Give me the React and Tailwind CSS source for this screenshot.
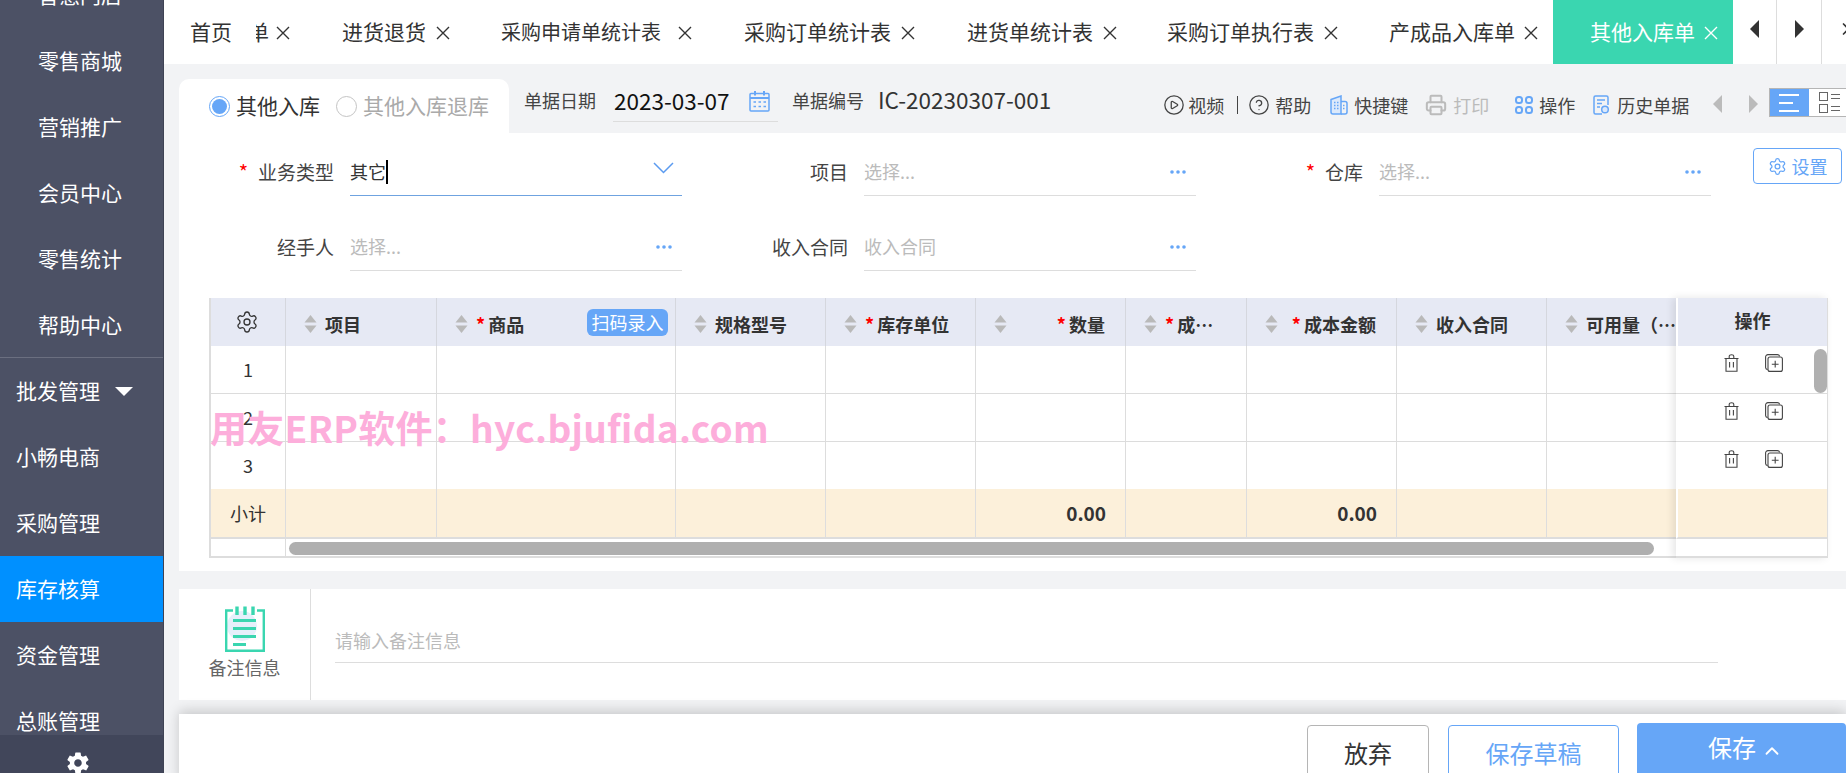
import { Settings, ChevronUp, CirclePlay, CircleHelp, Printer, ChevronRight } from "lucide-react";
import { IoMdSettings } from "react-icons/io";

const FONT = "font-['Noto_Sans_CJK_SC','Noto_Sans',sans-serif]";

const menuItems = [
  { label: "智慧门店", sub: true },
  { label: "零售商城", sub: true },
  { label: "营销推广", sub: true },
  { label: "会员中心", sub: true },
  { label: "零售统计", sub: true },
  { label: "帮助中心", sub: true, line: true },
  { label: "批发管理", caret: true },
  { label: "小畅电商" },
  { label: "采购管理" },
  { label: "库存核算", active: true },
  { label: "资金管理" },
  { label: "总账管理" },
];

const tabs = [
  { label: "进货退货", left: "ml-[52px]", gap: "ml-[10px]" },
  { label: "采购申请单统计表", left: "ml-[51px] text-[20px]", gap: "ml-[17px]" },
  { label: "采购订单统计表", left: "ml-[52px]", gap: "ml-[10px]" },
  { label: "进货单统计表", left: "ml-[52px]", gap: "ml-[10px]" },
  { label: "采购订单执行表", left: "ml-[50px]", gap: "ml-[10px]" },
  { label: "产成品入库单", left: "ml-[51px]", gap: "ml-[9px]" },
];

const columns = [
  { label: "项目", w: "w-[151px]" },
  { label: "商品", w: "w-[239px]", star: true, scan: true },
  { label: "规格型号", w: "w-[150px]" },
  { label: "库存单位", w: "w-[150px]", star: true },
  { label: "数量", w: "w-[150px]", star: true, right: true, total: "0.00" },
  { label: "成…", w: "w-[121px]", star: true },
  { label: "成本金额", w: "w-[150px]", star: true, right: true, total: "0.00" },
  { label: "收入合同", w: "w-[150px]" },
  { label: "可用量（…", w: "w-[129px]", last: true },
];

function CloseIcon({ className = "" }) {
  return (
    <svg width="14" height="14" viewBox="0 0 14 14" fill="none" stroke="currentColor" strokeWidth="1.4" className={`shrink-0 mt-[2px] ${className}`}>
      <path d="M1 1L13 13M13 1L1 13" />
    </svg>
  );
}

function SortArrows() {
  return (
    <svg width="13" height="18" viewBox="0 0 13 18" className="shrink-0 mt-[3px]">
      <path d="M6.5 0L12.5 7.5H0.5Z" fill="#b9b9b9" />
      <path d="M6.5 18L12.5 10.5H0.5Z" fill="#b9b9b9" />
    </svg>
  );
}

function Dots() {
  return (
    <svg width="16" height="4" viewBox="0 0 16 4">
      <circle cx="2" cy="2" r="1.8" fill="#66a6f7" />
      <circle cx="8" cy="2" r="1.8" fill="#66a6f7" />
      <circle cx="14" cy="2" r="1.8" fill="#66a6f7" />
    </svg>
  );
}

function TrashIcon() {
  return (
    <svg width="15" height="18" viewBox="0 0 15 18" fill="none" stroke="#444" strokeWidth="1.1">
      <path d="M0.5 4.5H14.5M2 4.5V17.2H13V4.5M5.2 4.5V2.6C5.2 1.3 6.2 0.7 7.5 0.7C8.8 0.7 9.8 1.3 9.8 2.6V4.5M5.6 8V13.6M9.4 8V13.6" />
    </svg>
  );
}

function CopyIcon() {
  return (
    <svg width="18" height="18" viewBox="0 0 18 18" fill="none" stroke="#444" strokeWidth="1.1">
      <path d="M2.6 15.6C1.4 15.4 0.6 14.6 0.6 13.4V3C0.6 1.6 1.6 0.6 3 0.6H12.4C13.6 0.6 14.4 1.4 14.6 2.4" />
      <rect x="3" y="3" width="14.4" height="14.4" rx="2" />
      <path d="M10.2 6.8V13.6M6.8 10.2H13.6" />
    </svg>
  );
}

function BuildingIcon() {
  return (
    <svg width="18" height="20" viewBox="0 0 18 20" fill="none" stroke="#66a6f7" strokeWidth="1.5">
      <path d="M1 4.5L11 1V19H3C1.9 19 1 18.1 1 17V4.5Z" fill="#dce9fb" />
      <path d="M11 6.5H15C16.1 6.5 17 7.4 17 8.5V17C17 18.1 16.1 19 15 19H11" />
      <path d="M4 7.5H5.5M7 7.5H8.5M4 10.5H5.5M7 10.5H8.5M4 13.5H5.5M7 13.5H8.5M13 10.5H14.5M13 13.5H14.5" strokeWidth="1.3" />
    </svg>
  );
}

function GridIcon() {
  return (
    <svg width="18" height="18" viewBox="0 0 18 18" fill="none" stroke="#66a6f7" strokeWidth="2">
      <rect x="1" y="1" width="6" height="6" rx="2.5" />
      <rect x="11" y="1" width="6" height="6" rx="2.5" />
      <rect x="1" y="11" width="6" height="6" rx="2.5" />
      <rect x="11" y="11" width="6" height="6" rx="2.5" />
    </svg>
  );
}

function HistoryIcon() {
  return (
    <svg width="17" height="20" viewBox="0 0 17 20" fill="none" stroke="#66a6f7" strokeWidth="1.5">
      <path d="M9 19H2.5C1.5 19 1 18.4 1 17.5V2.5C1 1.5 1.5 1 2.5 1H13.5C14.5 1 15 1.5 15 2.5V10" />
      <path d="M4 5H12M4 8.5H9M4 12H7" />
      <circle cx="12" cy="14.5" r="3.3" fill="#dce9fb" />
    </svg>
  );
}

function CalendarIcon() {
  return (
    <svg width="21" height="22" viewBox="0 0 21 22" fill="none" stroke="#66a6f7" strokeWidth="1.5">
      <rect x="1" y="3.5" width="19" height="17.5" rx="1" />
      <path d="M1 8H20" strokeWidth="2" />
      <path d="M6 1V5.5M15 1V5.5" strokeWidth="2" />
      <path d="M4.5 12H7M9.5 12H12M14.5 12H17M4.5 16.5H7M9.5 16.5H12M14.5 16.5H17" strokeWidth="1.6" />
    </svg>
  );
}

function NoteIcon() {
  return (
    <svg width="40" height="46" viewBox="0 0 40 46" fill="none">
      <circle cx="17" cy="20" r="15" fill="#e6effb" />
      <path d="M8 4.5H1.2V44.8H38.8V4.5H32" stroke="#3ad6b0" strokeWidth="2.4" />
      <path d="M12 0.5V9M20 0.5V9M28 0.5V9" stroke="#3ad6b0" strokeWidth="3.4" />
      <path d="M8 14.5H31M8 22.5H31M8 30.5H31M8 38.5H21" stroke="#3ad6b0" strokeWidth="3.2" />
    </svg>
  );
}

function Sidebar() {
  return (
    <aside className="w-[164px] shrink-0 h-full bg-[#4c5165] border-r border-[#3f4354] flex flex-col overflow-hidden">
      <div className="flex-1 overflow-hidden">
        <div className="-mt-[38px]">
          {menuItems.map((item) => (
            <div
              key={item.label}
              className={`h-[66px] flex items-center text-[21px] text-white ${item.sub ? "pl-[38px]" : "pl-[16px]"} ${item.active ? "bg-[#0090ff]" : ""} ${item.line ? "border-b border-[#6b6f80]" : ""}`}
            >
              {item.label}
              {item.caret && (
                <span className="ml-[15px] mt-[1px] w-0 h-0 border-x-[9px] border-x-transparent border-t-[9px] border-t-white" />
              )}
            </div>
          ))}
        </div>
      </div>
      <div className="h-[38px] shrink-0 bg-[#41465a] flex justify-center pt-[15px] overflow-hidden">
        <IoMdSettings size={26} color="#fff" className="mr-[8px] shrink-0" />
      </div>
    </aside>
  );
}

function TabBar() {
  return (
    <div className="h-[64px] shrink-0 bg-white flex items-center text-[21px] text-[#333] overflow-hidden whitespace-nowrap">
      <span className="ml-[26px] shrink-0">首页</span>
      <span className="ml-[24px] w-[13px] shrink-0 overflow-hidden flex justify-end">
        <span className="shrink-0">单</span>
      </span>
      <CloseIcon className="ml-[7px]" />
      {tabs.map((t) => (
        <div key={t.label} className={`flex items-center shrink-0 ${t.left}`}>
          <span>{t.label}</span>
          <CloseIcon className={t.gap} />
        </div>
      ))}
      <div className="ml-[15px] w-[180px] h-full shrink-0 bg-[#3ad6b0] text-white flex items-center pl-[37px]">
        <span>其他入库单</span>
        <CloseIcon className="ml-[9px]" />
      </div>
      <div className="w-[44px] h-full shrink-0 border-r border-[#ddd] flex items-center justify-center pb-[6px]">
        <span className="w-0 h-0 border-y-[9px] border-y-transparent border-r-[9px] border-r-[#333]" />
      </div>
      <div className="w-[45px] h-full shrink-0 border-r border-[#ddd] flex items-center justify-center pb-[6px]">
        <span className="w-0 h-0 border-y-[9px] border-y-transparent border-l-[9px] border-l-[#333]" />
      </div>
      <ChevronRight size={20} className="ml-[14px] shrink-0 mb-[6px]" color="#333" />
    </div>
  );
}

function ToolButton({ icon, label, className = "", muted }) {
  return (
    <div className={`flex items-center shrink-0 ${muted ? "text-[#bbb]" : "text-[#444]"} ${className}`}>
      {icon}
      <span>{label}</span>
    </div>
  );
}

function Toolbar() {
  return (
    <div className="h-[69px] shrink-0 flex items-end">
      <div className="w-[330px] h-[54px] shrink-0 bg-white rounded-t-[10px] flex items-center pl-[30px] text-[21px]">
        <span className="w-[21px] h-[21px] rounded-full border border-[#66a6f7] flex items-center justify-center">
          <span className="w-[15px] h-[15px] rounded-full bg-[#66a6f7]" />
        </span>
        <span className="ml-[6px] text-[#333]">其他入库</span>
        <span className="ml-[16px] w-[21px] h-[21px] rounded-full border border-[#c4c4c4]" />
        <span className="ml-[6px] text-[#aaa]">其他入库退库</span>
      </div>
      <div className="flex-1 h-full flex items-start text-[18px] text-[#444] whitespace-nowrap">
        <span className="ml-[15px] mt-[23px] leading-[26px]">单据日期</span>
        <div className="ml-[17px] mt-[20px] w-[165px] h-[38px] border-b border-[#ddd] flex items-center pb-[4px] shrink-0">
          <span className="text-[22.5px] text-[#111] pl-[1px]">2023-03-07</span>
          <span className="ml-[19px]"><CalendarIcon /></span>
        </div>
        <span className="ml-[14px] mt-[23px] leading-[26px]">单据编号</span>
        <span className="ml-[14px] mt-[22px] leading-[26px] text-[22.5px] text-[#333]">IC-20230307-001</span>
        <div className="ml-[112px] mt-[28px] h-[26px] flex items-center">
          <ToolButton icon={<CirclePlay size={22} strokeWidth={1.4} color="#444" />} label="视频" className="gap-[3px]" />
          <span className="ml-[13px] w-[1px] h-[18px] bg-[#444] shrink-0" />
          <ToolButton icon={<CircleHelp size={22} strokeWidth={1.4} color="#444" />} label="帮助" className="ml-[10px] gap-[5px]" />
          <ToolButton icon={<BuildingIcon />} label="快捷键" className="ml-[19px] gap-[6px]" />
          <ToolButton icon={<Printer size={22} strokeWidth={2.2} color="#bbb" />} label="打印" className="ml-[17px] gap-[6px]" muted />
          <ToolButton icon={<GridIcon />} label="操作" className="ml-[26px] gap-[6px]" />
          <ToolButton icon={<HistoryIcon />} label="历史单据" className="ml-[18px] gap-[7px]" />
          <span className="ml-[24px] w-0 h-0 shrink-0 border-y-[9px] border-y-transparent border-r-[9px] border-r-[#bbb] -mt-[2px]" />
          <span className="ml-[27px] w-0 h-0 shrink-0 border-y-[9px] border-y-transparent border-l-[9px] border-l-[#bbb] -mt-[2px]" />
          <div className="ml-[11px] -mt-[5px] w-[80px] h-[29px] shrink-0 flex border border-[#b5b5b5] bg-white">
            <div className="w-[39px] bg-[#66a6f7] flex flex-col justify-center gap-[6px] px-[9px]">
              <span className="h-[2px] w-[20px] bg-white" />
              <span className="h-[2px] w-[14px] bg-white" />
              <span className="h-[2px] w-[20px] bg-white" />
            </div>
            <div className="flex-1 pl-[10px] flex flex-col justify-center gap-[3px]">
              <div className="flex items-center gap-[3px]">
                <span className="w-[9px] h-[9px] border border-[#666]" />
                <span className="w-[9px] h-[5px] border-y border-[#666]" />
              </div>
              <div className="flex items-center gap-[3px]">
                <span className="w-[9px] h-[9px] border border-[#666]" />
                <span className="w-[9px] h-[5px] border-y border-[#666]" />
              </div>
            </div>
          </div>
        </div>
      </div>
    </div>
  );
}

function Field({ label, star, width, placeholder, value, active, trailing }) {
  return (
    <div className={`flex items-center h-[48px] shrink-0 ${width}`}>
      <div className="flex-1 pr-[16px] flex justify-end items-center text-[19px] text-[#444]">
        {star && <span className="text-[#f00] mr-[10px] text-[20px]">*</span>}
        {label}
      </div>
      <div className={`w-[332px] h-full flex items-center justify-between border-b ${active ? "border-[#6fa3e0]" : "border-[#ddd]"}`}>
        {value ? (
          <span className="flex items-center text-[18px] text-[#333]">
            {value}
            <span className="w-[2px] h-[24px] bg-black" />
          </span>
        ) : (
          <span className="text-[18px] text-[#bbb]">{placeholder}</span>
        )}
        <span className="mr-[10px] flex items-center">{trailing}</span>
      </div>
    </div>
  );
}

function DataTable() {
  return (
    <div className="mt-[27px] ml-[30px] w-[1619px] flex text-[18px] text-[#333]">
      <div className="w-[1467px] shrink-0 border-l-2 border-[#ddd]">
        <div className="flex h-[48px] bg-[#e6e9f4]">
          <div className="w-[75px] shrink-0 border-r border-[#d5d7de] flex items-center justify-center pr-[2px]">
            <Settings size={24} strokeWidth={1.3} color="#333" />
          </div>
          {columns.map((c) => (
            <div
              key={c.label}
              className={`${c.w} shrink-0 flex items-center pl-[18px] font-bold whitespace-nowrap overflow-hidden ${c.last ? "" : "border-r border-[#d5d7de]"}`}
            >
              <SortArrows />
              <span className={`flex items-center mt-[4px] ${c.right ? "flex-1 justify-end pr-[20px]" : "ml-[8px]"}`}>
                {c.star && <span className="text-[#f00] mr-[3px]">*</span>}
                {c.label}
              </span>
              {c.scan && (
                <span className="ml-auto mr-[7px] w-[81px] h-[27px] rounded-[6px] bg-[#66a6f7] text-white font-normal flex items-center justify-center">
                  扫码录入
                </span>
              )}
            </div>
          ))}
        </div>
        {[1, 2, 3].map((n) => (
          <div key={n} className={`flex ${n === 3 ? "h-[47px]" : "h-[48px] border-b border-[#dcdcdc]"}`}>
            <div className="w-[75px] shrink-0 border-r border-[#ddd] flex items-center justify-center">{n}</div>
            {columns.map((c) => (
              <div key={c.label} className={`${c.w} shrink-0 ${c.last ? "" : "border-r border-[#ddd]"}`} />
            ))}
          </div>
        ))}
        <div className="flex h-[50px] bg-[#fcf0da] border-b-2 border-[#ddd]">
          <div className="w-[75px] shrink-0 border-r border-[#ddd] flex items-center justify-center">小计</div>
          {columns.map((c) => (
            <div
              key={c.label}
              className={`${c.w} shrink-0 flex items-center justify-end pr-[19px] text-[19px] font-semibold ${c.last ? "" : "border-r border-[#ddd]"}`}
            >
              {c.total}
            </div>
          ))}
        </div>
        <div className="flex h-[19px] border-b-2 border-[#ddd]">
          <div className="w-[75px] shrink-0 border-r border-[#ddd]" />
          <div className="flex-1 pl-[3px] pt-[3px]">
            <div className="w-[1365px] h-[13px] rounded-full bg-[#afafaf]" />
          </div>
        </div>
      </div>
      <div className="relative w-[152px] shrink-0 shadow-[-3px_0_8px_rgba(0,0,0,0.1)] border-r border-[#ddd]">
        <div className="h-[48px] bg-[#e6e9f4] border-l-2 border-white flex items-center justify-center font-bold pb-[4px]">操作</div>
        {[0, 1, 2].map((n) => (
          <div key={n} className={`flex gap-[26px] pl-[48px] pt-[8px] bg-white ${n === 2 ? "h-[47px]" : "h-[48px] border-b border-[#dcdcdc]"}`}>
            <TrashIcon />
            <CopyIcon />
          </div>
        ))}
        <div className="h-[50px] bg-[#fcf0da] border-l-2 border-white border-b-2 border-b-[#ddd]" />
        <div className="h-[19px] border-b-2 border-[#ddd]" />
        <span className="absolute right-0 top-[51px] w-[13px] h-[44px] rounded-full bg-[#b0b0b0]" />
      </div>
    </div>
  );
}

function FormCard() {
  return (
    <div className="h-[438px] shrink-0 bg-white pt-[15px]">
      <div className="flex">
        <Field
          label="业务类型"
          star
          width="w-[503px]"
          value="其它"
          active
          trailing={
            <svg width="21" height="12" viewBox="0 0 21 12" fill="none" stroke="#5b9bf0" strokeWidth="1.5" className="-mt-[7px] -mr-[2px]">
              <path d="M1 1L10.5 10.5L20 1" />
            </svg>
          }
        />
        <Field label="项目" width="w-[514px]" placeholder="选择..." trailing={<Dots />} />
        <Field label="仓库" star width="w-[515px]" placeholder="选择..." trailing={<Dots />} />
        <div className="ml-[42px] w-[89px] h-[36px] shrink-0 rounded-[4px] border border-[#66a6f7] text-[#66a6f7] text-[18px] flex items-center justify-center gap-[5px]">
          <Settings size={19} strokeWidth={1.6} />
          设置
        </div>
      </div>
      <div className="flex mt-[27px]">
        <Field label="经手人" width="w-[503px]" placeholder="选择..." trailing={<Dots />} />
        <Field label="收入合同" width="w-[514px]" placeholder="收入合同" trailing={<Dots />} />
      </div>
      <DataTable />
    </div>
  );
}

function RemarkCard() {
  return (
    <div className="mt-[18px] h-[111px] shrink-0 bg-white flex">
      <div className="w-[132px] shrink-0 border-r border-[#ddd] flex flex-col items-center pt-[17px]">
        <NoteIcon />
        <span className="text-[18px] text-[#666] mt-[2px] leading-[26px]">备注信息</span>
      </div>
      <div className="ml-[24px] w-[1383px] h-[74px] border-b border-[#ddd] flex items-center pt-[30px] text-[18px] text-[#bbb]">
        请输入备注信息
      </div>
    </div>
  );
}

function Footer() {
  return (
    <div className="mt-[14px] flex-1 bg-white shadow-[0_-3px_12px_rgba(0,0,0,0.18)] flex items-start justify-end text-[24px]">
      <div className="mt-[11px] w-[122px] h-[60px] rounded-[4px] border border-[#b5b5b5] text-[#333] flex items-center justify-center pb-[4px]">放弃</div>
      <div className="mt-[11px] ml-[19px] w-[171px] h-[60px] rounded-[4px] border border-[#66a6f7] text-[#66a6f7] flex items-center justify-center pb-[4px]">保存草稿</div>
      <div className="mt-[9px] ml-[18px] w-[209px] h-[60px] rounded-[4px] bg-[#66a6f7] text-white flex items-start pl-[71px] pt-[6px]">
        保存
        <ChevronUp size={22} strokeWidth={2} className="ml-[5px] mt-[11px]" />
      </div>
    </div>
  );
}

export default function App() {
  return (
    <div className={`relative w-[1846px] h-[773px] overflow-hidden flex bg-[#f2f3f5] ${FONT}`}>
      <Sidebar />
      <div className="flex-1 min-w-0 flex flex-col">
        <TabBar />
        <div className="flex-1 min-h-0 flex flex-col pl-[15px]">
          <Toolbar />
          <FormCard />
          <RemarkCard />
          <Footer />
        </div>
      </div>
      <span className="absolute left-[210px] top-[402px] text-[37px] leading-[50px] font-bold tracking-[0.3px] text-[#fdaedb] whitespace-nowrap font-['Noto_Sans_CJK_SC',sans-serif]">
        用友ERP软件：hyc.bjufida.com
      </span>
    </div>
  );
}
